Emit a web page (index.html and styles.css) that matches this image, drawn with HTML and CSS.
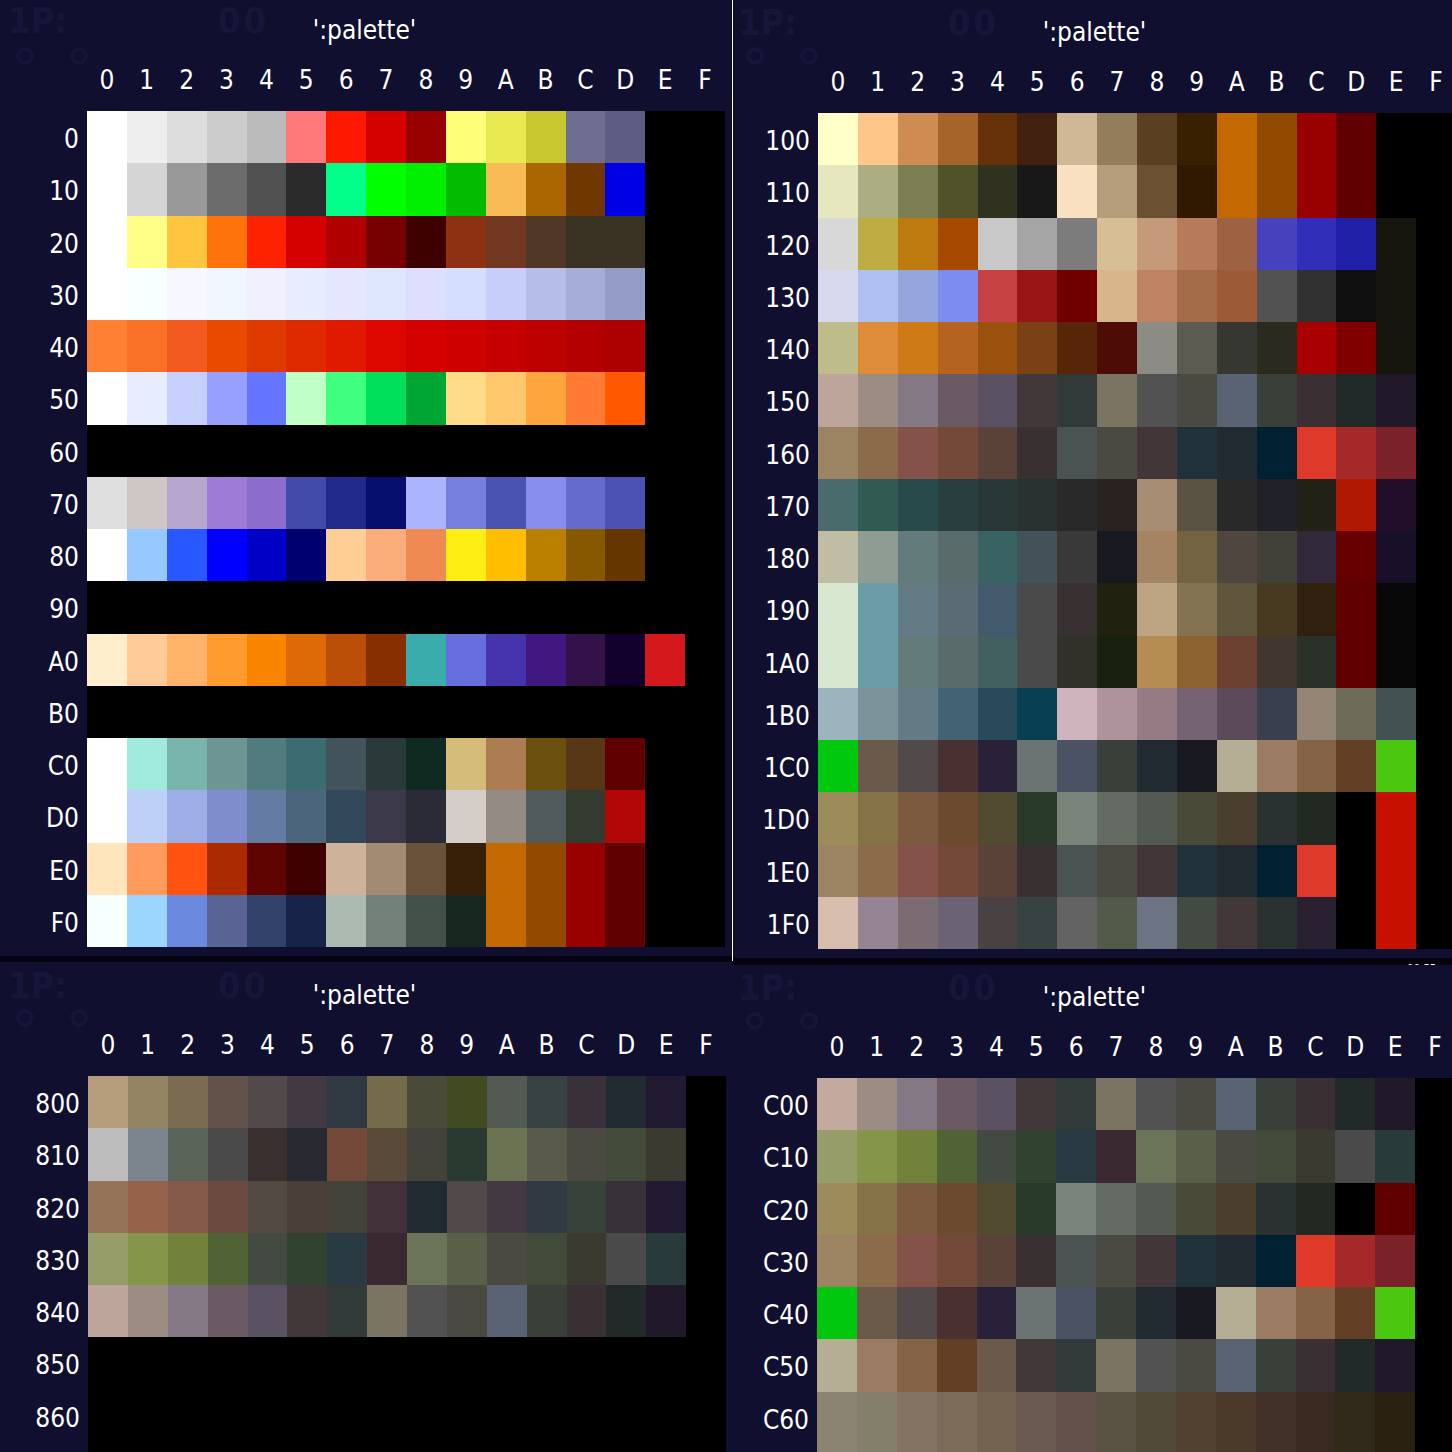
FILE: index.html
```html
<!DOCTYPE html>
<html>

<head>
  <meta charset="utf-8" />
  <title>':palette'</title>
  <link rel="stylesheet" href="styles.css">
</head>

<body>
  <main class="screen">
    <section class="col col-left">
      <div class="panel panel-a" data-palette="a"></div>
      <div class="bar bar-left"></div>
      <div class="panel panel-c" data-palette="c"></div>
    </section>
    <section class="col col-right">
      <div class="panel panel-b" data-palette="b"></div>
      <div class="bar bar-right"><span class="clock">10:55</span></div>
      <div class="panel panel-d" data-palette="d"></div>
    </section>
    <div class="divider"></div>
  </main>
  <script src="script.js"></script>
</body>

</html>
```

FILE: styles.css
```css
* { box-sizing: border-box; margin: 0; padding: 0; }
html, body {
  width: 1452px;
  height: 1452px;
  overflow: hidden;
  background: #100f30;
}
.screen {
  position: relative;
  display: flex;
  height: 1452px;
  font-family: "DejaVu Sans Condensed", "DejaVu Sans", sans-serif;
  font-stretch: condensed;
  font-size: 26px;
  color: #fff;
}
.col {
  display: flex;
  flex-direction: column;
  flex: none;
  overflow: hidden;
}
.col-left { width: 732px; }
.col-right { width: 720px; }

.divider {
  position: absolute;
  left: 732px;
  top: 0;
  width: 1px;
  height: 961px;
  background: #fff;
}
.bar {
  background: #04030f;
  flex: none;
  overflow: hidden;
}
.bar-left { height: 6px; }
.bar-right { height: 7px; text-align: right; padding-right: 16px; }
.clock {
  display: block;
  font-size: 11px;
  line-height: 12px;
  margin-top: 5px;
}

/* one panel: label column + 16 swatch columns */
.panel {
  position: relative;
  display: grid;
  grid-template-columns: 87px repeat(16, 39.875px);
  grid-template-rows: 60px 40px 11px;
  grid-auto-rows: 52.25px;
  align-content: start;
  width: 732px;
  flex: none;
  overflow: hidden;
  background: #100f30;
}
.panel-a { height: 956px; }
.panel-b { height: 958px; padding-top: 2px; margin-left: -2px; grid-template-columns: 88px repeat(16, 39.875px); }
.panel-c { flex: 1; padding-top: 3px; grid-template-columns: 88px repeat(16, 39.875px); }
.panel-d { flex: 1; padding-top: 2px; margin-left: -2px; }

.title {
  grid-column: 1 / -1;
  width: 729px;
  text-align: center;
  line-height: 60px;
  z-index: 1;
}
.gap { grid-column: 1 / -1; }
.corner { grid-column: 1; }
.hex {
  text-align: center;
  line-height: 40px;
  z-index: 1;
}
.label {
  text-align: right;
  padding: 2px 8px 0 0;
  line-height: 52px;
  z-index: 1;
}
.swatch {
  background: #000;
  z-index: 1;
}

/* faint game screen showing through behind the palette */
.ghost {
  position: absolute;
  top: 0;
  font-weight: bold;
  font-size: 36px;
  line-height: normal;
  color: #16163a;
}
.panel-b .ghost, .panel-d .ghost { top: 2px; }
.panel-c .ghost { top: 3px; }
.ghost-player { left: 8px; }
.ghost-score { left: 218px; letter-spacing: 3px; }
.flower {
  position: absolute;
  top: 47px;
  width: 18px;
  height: 18px;
  border: 4px solid #15153a;
  border-radius: 50%;
}
.flower-a { left: 16px; }
.flower-b { left: 70px; }
```

FILE: script.js
```js
// palette rows, each one a string of up to 16 hex colours. missing cells stay black
const palettes = {
  a: {
    rows: ['0', '10', '20', '30', '40', '50', '60', '70', '80', '90', 'A0', 'B0', 'C0', 'D0', 'E0', 'F0'],
    colors: [
      'fff eee ddd ccc bbb ff7777 ff1800 d50000 990000 ffff77 e8e850 c8c830 6e6e90 5c5c84',
      'fff d5d5d5 999 6c6c6c 505050 2b2b2b 00ff88 00ff00 00ee00 00bb00 f8bb55 aa6600 703700 0000e6',
      'fff ffff88 ffc540 ff720c ff2200 d50000 b00000 770000 3f0000 8e3113 723720 513726 3a3222 3a3222',
      'fff f7ffff f6f7ff f0f6ff f0f0ff e7edff e5e6ff dfe7ff dedfff d4dfff c7cef9 b6bde9 a7add9 959cc8',
      'ff7f33 f97027 f25a20 ea4900 de3a00 df2a00 df1a00 dd0700 d50000 cf0000 c60000 bd0000 b40000 ad0000',
      'fff e7edff c7cfff 97a0ff 6675ff c0ffc6 40ff80 00e05a 00a633 ffdc88 ffc76b ffa53c ff7b33 ff5800',
      '',
      'dfdfdf cfc6c6 b6a6ce 9d7bd6 8c6ccc 434baa 202a8a 060e6e aab4ff 767ede 4a52b2 878ded 646bcc 4a51b2',
      'fff 97c8ff 2858ff 0000ff 0000c6 000070 ffce94 faad78 f08a53 ffee11 ffbe00 bb8000 885800 663600',
      '',
      'ffeecc ffcc99 ffb469 ff9b2f f88400 de6a07 bb4f07 882f00 3aacac 666edd 4433aa 411880 321248 11002b d5181b',
      '',
      'fff a0e9dd 79b5ac 6d9594 517b7f 3c6b72 42535b 2a3a3a 0f2a20 d5bc78 ac7d52 6b4f0e 583716 600000',
      'fff bfd0f8 9dade6 7f8dcc 647ba4 4b667c 33495b 3c3a4a 2a2b36 d5cdc8 948b84 515b5b 333a30 b30606',
      'ffe5bb ff9b5c ff530f aa2b00 5f0400 3f0000 ceb39a a38a72 6a5139 382008 c46800 924900 990000 600000',
      'f7ffff 9cd6ff 6b8adf 5a6494 31416a 18234a adbab2 73817a 425049 182820 c46800 924900 990000 600000',
    ],
  },
  b: {
    rows: ['100', '110', '120', '130', '140', '150', '160', '170', '180', '190', '1A0', '1B0', '1C0', '1D0', '1E0', '1F0'],
    colors: [
      'ffffc8 ffc689 ce8b52 a56429 663008 42200f d0b897 947d5a 5a4021 382000 c46800 924900 990000 600000',
      'e7e7bf adad84 7b7d52 505229 31311f 181818 f8e0c0 b59c7b 6b5131 311800 c46800 924900 990000 600000',
      'd8d8d8 bdac42 bd7a0f a54a00 c8c8c8 a5a5a5 7c7c7c d8be94 c59a7b b57b5a 9c6241 4642bd 312eb9 2020a8 15150e',
      'd8d8ef b0c0f0 95a6de 7d8cef c64242 991414 700000 d8b58a be8362 a56c4a 9c5a36 525252 313131 0f0f0f 15150e',
      'bfbc8b de8c39 ce7a16 b56320 99510d 7b4116 572608 4e0c06 8c8c84 5b5b52 373731 2a2a21 a80000 800000 15150e',
      'bda59c 9c8c84 847884 6b5a63 5a5263 423839 313939 7b7463 525252 4a4a42 5a6373 394039 3a3033 212929 211829',
      '9c8463 8c6b4a 845249 734a39 5a4239 393031 4a5252 4a4a42 423639 213139 212931 002131 de3929 a52929 7b2129',
      '4a6b6b 315a52 294a4a 293f3f 293737 293131 292929 2a2121 a58c73 5a5242 292929 212129 212118 b01804 210f29',
      'c0bda4 8e9c94 637b7b 5a6b6b 396363 425258 393939 181821 a58463 736342 4f4640 41413a 312939 660000 180f29',
      'd8e8d0 6b9ca8 637b84 5a6b73 425a6b 4a4a4a 393031 21210f bda583 847352 5f553c 483a20 312010 600000 080808',
      'd8e8d0 6b9ca8 637b7b 5a6b6b 426060 4a4a4a 31312a 182110 b58c52 8c6331 6b4031 423631 293129 600000 080808',
      '9cb4bd 7b949c 637b84 426373 294a5a 083f52 ceb5bd ad949c 947b84 736373 5a4a5a 393f4f 948473 6b6b58 425252',
      '00c80f 6b5a4a 524a4a 4a3131 292139 6b7373 4a5263 394039 212931 181821 b5ad94 9c7b63 846347 633f26 4ac80f',
      '9c8c5a 847347 7b5a3f 6b4a2f 524a31 293929 7b847b 636b63 525a52 4a4a39 4a3f2f 293131 212921 000 c61000',
      '9c8463 8c6b4a 845249 734a39 5a4239 393031 4a5252 4a4a42 423639 213139 212931 002131 de3929 000 c61000',
      'd6bdad 948494 7b6b73 6b6373 4a4242 394242 636363 525a4a 6b7384 424a42 423839 293131 292131 000 c61000',
    ],
  },
  c: {
    rows: ['800', '810', '820', '830', '840', '850', '860', ''],
    colors: [
      'b59c7b 948463 7b6b52 635249 524a4a 423942 313a42 736b4a 4a4a39 424a21 525a52 394242 393139 212931 211831',
      'bdbdbd 7b848c 5a6358 4a4a4a 3a2f2f 292931 734a39 5a4a39 42423a 293a31 6b7352 5a5a4a 4a4a42 424a39 3a3a31',
      '947359 94634a 845a4a 6b4a3f 524a42 4a3f39 42423a 423139 212931 524a4a 423942 313a42 394239 393139 211831',
      '979d68 85954a 72823a 506236 424a42 314231 293a42 3a2931 6b7358 5a5f4a 4a4a42 424a39 3a3a31 4a4a4a 293a3a',
      'bda59c 9c8c84 847884 6b5a63 5a5263 423839 313939 7b7463 525252 4a4a42 5a6373 394039 3a3033 212929 211829',
      '',
      '',
      '',
    ],
  },
  d: {
    rows: ['C00', 'C10', 'C20', 'C30', 'C40', 'C50', 'C60', ''],
    colors: [
      'c4a99f 9c8c84 847884 6b5a63 5a5263 423839 313939 7b7463 525252 4a4a42 5a6373 394039 3a3033 212929 211829',
      '979d68 85954a 72823a 506236 424a42 314231 293a42 3a2931 6b7358 5a5f4a 4a4a42 424a39 3a3a31 4a4a4a 293a3a',
      '9c8c5a 847347 7b5a3f 6b4a2f 524a31 293929 7b847b 636b63 525a52 4a4a39 4a3f2f 293131 212921 000 600000',
      '9c8463 8c6b4a 845249 734a39 5a4239 393031 4a5252 4a4a42 423639 213139 212931 002131 de3929 a52929 7b2129',
      '00c80f 6b5a4a 524a4a 4a3131 292139 6b7373 4a5263 394039 212931 181821 b5ad94 9c7b63 846347 633f26 4ac80f',
      'b5ad94 9c7b63 846347 633f26 6b5a4a 423839 313939 7b7463 525252 4a4a42 5a6373 394039 3a3033 212929 211829',
      '8c8473 847f6b 847363 7b6b58 736350 6b5a52 63504a 5a5242 524a39 524031 4a3929 423129 3a2921 31291a 2a2110',
      '8c8473 847f6b 847363 7b6b58 736350 6b5a52 63504a 5a5242 524a39 524031 4a3929 423129 3a2921 31291a 2a2110',
    ],
  },
};

const el = (className, text) => {
  const node = document.createElement('div');
  node.className = className;
  if (text) node.textContent = text;
  return node;
};

document.querySelectorAll('.panel').forEach(panel => {
  const { rows, colors } = palettes[panel.dataset.palette];
  panel.append(el('ghost ghost-player', '1P:'), el('ghost ghost-score', '00'));
  panel.append(el('flower flower-a'), el('flower flower-b'));
  panel.append(el('title', "':palette'"));
  panel.append(el('corner'));
  '0123456789ABCDEF'.split('').forEach(digit => panel.append(el('hex', digit)));
  panel.append(el('gap'));
  rows.forEach((row, y) => {
    panel.append(el('label', row));
    const cells = colors[y] ? colors[y].split(' ') : [];
    for (let x = 0; x < 16; x++) {
      const swatch = el('swatch');
      if (cells[x]) swatch.style.background = `#${cells[x]}`;
      panel.append(swatch);
    }
  });
});
```
